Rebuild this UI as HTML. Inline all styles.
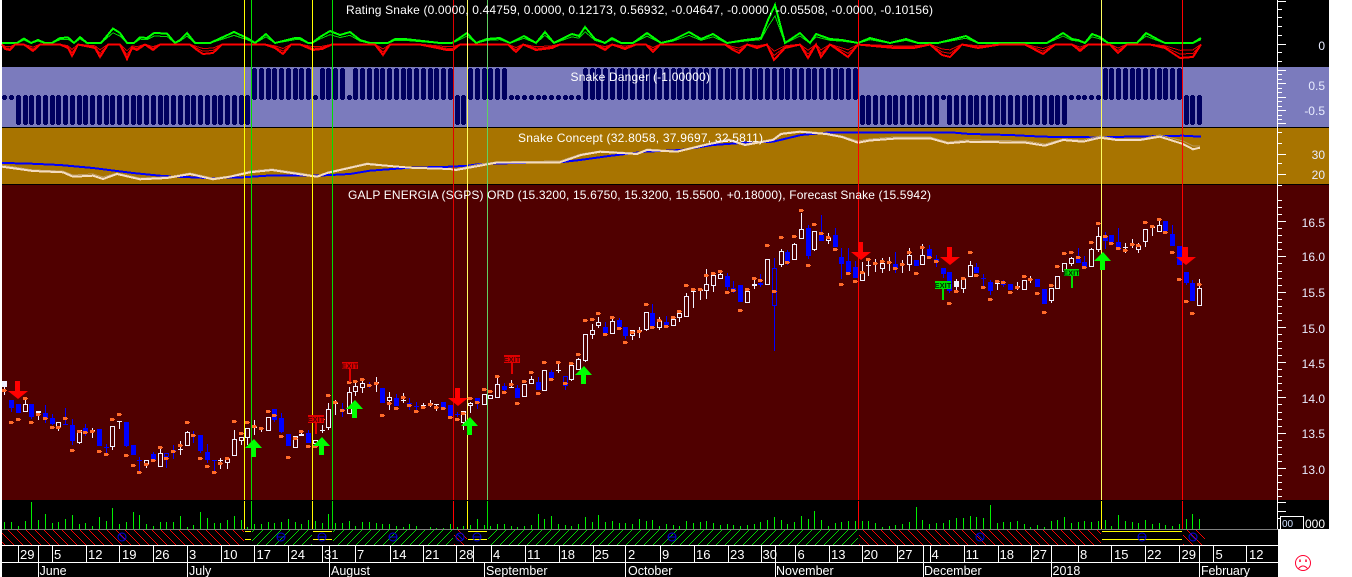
<!DOCTYPE html>
<html>
<head>
<meta charset="utf-8">
<style>
html,body{margin:0;padding:0;background:#fff;width:1352px;height:577px;overflow:hidden}
svg{display:block;position:absolute;left:0;top:0}
text{font-family:"Liberation Sans",sans-serif;fill:#fff}
.t{font-size:12px}
.a{font-size:12px;fill:#e8ecff;text-anchor:end}
.d{font-size:13px}
.m{font-size:12.5px}
.x{font-size:7.5px;font-weight:bold;text-anchor:middle}
</style>
</head>
<body>
<svg width="1352" height="577" viewBox="0 0 1352 577" xmlns="http://www.w3.org/2000/svg">
<rect x="0" y="0" width="1352" height="577" fill="#fff"/>
<rect x="2" y="0" width="1327" height="529" fill="#000"/>
<rect x="2" y="67" width="1327" height="60" fill="#7b7bbd"/>
<rect x="2" y="128" width="1327" height="56" fill="#a87400"/>
<rect x="2" y="185" width="1327" height="315" fill="#500000"/>
<rect x="2" y="529" width="1276" height="48" fill="#000"/>

<g id="back" shape-rendering="crispEdges"></g>

<g fill="none" stroke-linejoin="miter" shape-rendering="crispEdges">
<polyline id="gl" stroke="#00ff00" stroke-width="2" points=""/>
<polyline id="rl" stroke="#ff0000" stroke-width="2" points=""/>
<polyline stroke="#0000ff" stroke-width="2" points="2,163 27,163.5 60,165 93,168 133,173 163,176 207,178 240,177.5 267,175.7 317,175.7 350,174 370,170.7 410,167.7 450,166.7 468,165.7 480,164 528,162.7 560,162.3 580,160 609,156 645,151.7 681,150 713,145 745,142.7 773,141.7 801,135 826,132.7 950,132.3 970,134 1010,135 1043,136.7 1093,137.3 1127,136.7 1183,135.7 1201,136.7"/>
<polyline stroke="#b89860" stroke-width="1" points="2,165 33,170 63,171 73,175 93,174 103,177 117,173 140,178 167,177 190,173 213,178 230,176 250,171 272,169 300,173 317,176 328,172 367,163 410,168 450,169 456,169 480,164 496,162 560,161 581,154 600,151 637,153 647,149 677,151 705,144 729,139 745,144 773,139 781,133 800,131 826,133 842,136 858,141 870,139 894,137 930,137 948,142 966,140 1026,141 1045,144 1063,139 1083,140 1100,136 1117,139 1140,139 1160,135 1183,141 1193,146 1200,146"/>
<polyline stroke="#f4dcc0" stroke-width="2" points="2,166.7 33,171 63,172.3 73,176.7 93,175.7 103,179 117,174 140,179.3 167,178 190,174 213,179.3 230,176.7 250,172.3 272,170 300,174.3 317,176.7 328,172.7 367,164 410,167.7 450,169 456,170 480,165.7 496,162.7 560,162.3 581,155 600,151.7 637,154 647,150 677,151.7 705,145 729,140 745,145 773,140 781,134 800,131.7 826,134 842,137 858,142.7 870,140.5 894,138.7 930,138.3 948,143.3 966,141.7 1026,142.7 1045,145.7 1063,140 1083,141.7 1100,137.7 1117,140 1140,140 1160,136.7 1183,144 1193,149.3 1200,147.7"/>
</g>

<g id="chart" shape-rendering="crispEdges"></g>

<!-- vertical signal lines -->
<g shape-rendering="crispEdges">
<rect x="244" y="0" width="1" height="500" fill="#ffff00"/><rect x="244" y="501" width="1" height="28" fill="#ffff00"/>
<rect x="251" y="0" width="1" height="500" fill="#00e000"/><rect x="251" y="501" width="1" height="28" fill="#00e000"/>
<rect x="312" y="0" width="1" height="500" fill="#ffff00"/><rect x="312" y="501" width="1" height="28" fill="#ffff00"/>
<rect x="332" y="0" width="1" height="500" fill="#00e000"/><rect x="332" y="501" width="1" height="28" fill="#00e000"/>
<rect x="453" y="0" width="1" height="500" fill="#e00000"/><rect x="453" y="501" width="1" height="28" fill="#ff0000"/>
<rect x="467" y="0" width="1" height="500" fill="#ffff60"/><rect x="467" y="501" width="1" height="28" fill="#ffff00"/>
<rect x="487" y="0" width="1" height="500" fill="#60d060"/><rect x="487" y="501" width="1" height="28" fill="#00e000"/>
<rect x="858" y="0" width="1" height="500" fill="#ff0000"/><rect x="858" y="501" width="1" height="28" fill="#ff0000"/>
<rect x="1101" y="0" width="1" height="500" fill="#ffff60"/><rect x="1101" y="501" width="1" height="28" fill="#ffff00"/>
<rect x="1182" y="0" width="1" height="500" fill="#ff0000"/><rect x="1182" y="501" width="1" height="28" fill="#ff0000"/>
</g>

<!-- exit signs -->
<g shape-rendering="crispEdges">
<rect x="308" y="415" width="16" height="8" fill="#e00000"/><rect x="315" y="423" width="2" height="11" fill="#e00000"/>
<rect x="342" y="362" width="16" height="7" fill="#e00000"/><rect x="349" y="369" width="2" height="13" fill="#e00000"/>
<rect x="504" y="355" width="16" height="8" fill="#e00000"/><rect x="511" y="363" width="2" height="11" fill="#e00000"/>
<rect x="935" y="281" width="16" height="8" fill="#00e000"/><rect x="942" y="289" width="2" height="11" fill="#00e000"/>
<rect x="1064" y="269" width="15" height="7" fill="#00e000"/><rect x="1071" y="276" width="2" height="12" fill="#00e000"/>
</g>
<text class="x" x="316" y="422" style="fill:#500000">EXIT</text>
<text class="x" x="350" y="368.5" style="fill:#500000">EXIT</text>
<text class="x" x="512" y="362" style="fill:#500000">EXIT</text>
<text class="x" x="943" y="288" style="fill:#003000">EXIT</text>
<text class="x" x="1071.5" y="275.5" style="fill:#003000">EXIT</text>

<!-- arrows -->
<g fill="#ff0000">
<path d="M15 381h5v10h8l-10 8l-10-8h7z"/>
<path d="M455 388h5v10h8l-10 8l-10-8h7z"/>
<path d="M858 242h5v10h8l-10 8l-10-8h7z"/>
<path d="M947 247h5v10h8l-10 8l-10-8h7z"/>
<path d="M1183 247h5v10h8l-10 8l-10-8h7z"/>
</g>
<g fill="#00ff00">
<path d="M254 439l8 9h-6v9h-5v-9h-6z"/>
<path d="M322 437l8 9h-6v9h-5v-9h-6z"/>
<path d="M355 400l8 9h-6v9h-5v-9h-6z"/>
<path d="M470 417l8 9h-6v9h-5v-9h-6z"/>
<path d="M584 366l8 9h-6v9h-5v-9h-6z"/>
<path d="M1103 252l8 9h-6v9h-5v-9h-6z"/>
</g>

<!-- hatch row -->
<g id="hatch" shape-rendering="crispEdges"></g>
<g shape-rendering="crispEdges">
<rect x="245" y="531" width="6" height="1" fill="#ffff00"/><rect x="245" y="539" width="6" height="1" fill="#ffff00"/>
<rect x="313" y="531" width="19" height="1" fill="#ffff00"/><rect x="313" y="539" width="19" height="1" fill="#ffff00"/>
<rect x="468" y="531" width="19" height="1" fill="#ffff00"/><rect x="468" y="539" width="19" height="1" fill="#ffff00"/>
<rect x="1102" y="531" width="80" height="1" fill="#ffff00"/><rect x="1102" y="539" width="80" height="1" fill="#ffff00"/>
<rect x="2" y="529" width="1276" height="1" fill="#808080"/>
<rect x="2" y="545" width="1276" height="1" fill="#fff"/>
<rect x="2" y="562" width="1276" height="1" fill="#fff"/>
</g>
<g fill="none" stroke="#0000e0" stroke-width="1">
<circle cx="122" cy="537" r="4"/><path d="M119 534l6 6"/>
<circle cx="281" cy="537" r="4"/><path d="M277 537h8"/>
<circle cx="322" cy="537" r="4"/><path d="M318 537h8"/>
<circle cx="393" cy="537" r="4"/><path d="M389 537h8"/>
<circle cx="460" cy="537" r="4"/><path d="M457 534l6 6"/>
<circle cx="477" cy="537" r="4"/><path d="M473 537h8"/>
<circle cx="672" cy="537" r="4"/><path d="M668 537h8"/>
<circle cx="980" cy="537" r="4"/><path d="M977 534l6 6"/>
<circle cx="1142" cy="537" r="4"/><path d="M1138 537h8"/>
<circle cx="1193" cy="537" r="4"/><path d="M1190 534l6 6"/>
</g>

<!-- date dividers -->
<path shape-rendering="crispEdges" stroke="#fff" stroke-width="1" fill="none" d="M18.5 546V562M38.5 546V577M52.5 546V562M86.5 546V562M119.5 546V562M153.5 546V562M187.5 546V577M221.5 546V562M254.5 546V562M288.5 546V562M322.5 546V562M329.5 546V577M355.5 546V562M390.5 546V562M423.5 546V562M456.5 546V562M473.5 546V562M484.5 563V577M491.5 546V562M525.5 546V562M559.5 546V562M593.5 546V562M625.5 546V577M660.5 546V562M694.5 546V562M728.5 546V562M761.5 546V562M775.5 546V577M795.5 546V562M829.5 546V562M862.5 546V562M897.5 546V562M923.5 546V577M930.5 546V562M964.5 546V562M998.5 546V562M1031.5 546V562M1051.5 546V577M1078.5 546V562M1111.5 546V562M1145.5 546V562M1179.5 546V562M1199.5 546V577M1213.5 546V562M1246.5 546V562"/>

<!-- titles -->
<text class="t" x="346" y="14" textLength="587" lengthAdjust="spacing">Rating Snake (0.0000, 0.44759, 0.0000, 0.12173, 0.56932, -0.04647, -0.0000, -0.05508, -0.0000, -0.10156)</text>
<text class="t" x="570.5" y="81" textLength="139.5" lengthAdjust="spacing">Snake Danger (-1.00000)</text>
<text class="t" x="518" y="142" textLength="245" lengthAdjust="spacing">Snake Concept (32.8058, 37.9697, 32.5811)</text>
<text class="t" x="348" y="199" textLength="583" lengthAdjust="spacing">GALP ENERGIA (SGPS) ORD (15.3200, 15.6750, 15.3200, 15.5500, +0.18000), Forecast Snake (15.5942)</text>

<!-- axis labels -->
<text class="a" x="1325" y="50">0</text>
<text class="a" x="1325" y="90">0.5</text>
<text class="a" x="1325" y="115">-0.5</text>
<text class="a" x="1325" y="159">30</text>
<text class="a" x="1325" y="179">20</text>
<text class="a" x="1325" y="227">16.5</text>
<text class="a" x="1325" y="261">16.0</text>
<text class="a" x="1325" y="297">15.5</text>
<text class="a" x="1325" y="333">15.0</text>
<text class="a" x="1325" y="368">14.5</text>
<text class="a" x="1325" y="403">14.0</text>
<text class="a" x="1325" y="438">13.5</text>
<text class="a" x="1325" y="474">13.0</text>
<rect x="1280.5" y="516.5" width="23" height="13" fill="#000" stroke="#fff" stroke-width="1" shape-rendering="crispEdges"/>
<text x="1282" y="527" style="font-size:10px;fill:#cfe0ff">00</text>
<text class="a" x="1325" y="528" style="fill:#fff">000</text>
<rect x="1278" y="529" width="74" height="48" fill="#fff"/>

<!-- date labels -->
<text class="d" x="20" y="559">29</text><text class="d" x="54" y="559">5</text><text class="d" x="88" y="559">12</text><text class="d" x="122" y="559">19</text><text class="d" x="155" y="559">26</text><text class="d" x="189" y="559">3</text><text class="d" x="223" y="559">10</text><text class="d" x="256.5" y="559">17</text><text class="d" x="290.5" y="559">24</text><text class="d" x="324" y="559">31</text><text class="d" x="357" y="559">7</text><text class="d" x="392" y="559">14</text><text class="d" x="425" y="559">21</text><text class="d" x="459" y="559">28</text><text class="d" x="493" y="559">4</text><text class="d" x="527" y="559">11</text><text class="d" x="560.5" y="559">18</text><text class="d" x="594.5" y="559">25</text><text class="d" x="628" y="559">2</text><text class="d" x="662" y="559">9</text><text class="d" x="696" y="559">16</text><text class="d" x="730" y="559">23</text><text class="d" x="762.5" y="559">30</text><text class="d" x="797.5" y="559">6</text><text class="d" x="831" y="559">13</text><text class="d" x="863.5" y="559">20</text><text class="d" x="898" y="559">27</text><text class="d" x="931.5" y="559">4</text><text class="d" x="965.5" y="559">11</text><text class="d" x="999.5" y="559">18</text><text class="d" x="1032.5" y="559">27</text><text class="d" x="1080" y="559">8</text><text class="d" x="1114" y="559">15</text><text class="d" x="1147" y="559">22</text><text class="d" x="1181.5" y="559">29</text><text class="d" x="1215.5" y="559">5</text><text class="d" x="1249" y="559">12</text>
<text class="m" x="39.5" y="575">June</text><text class="m" x="189" y="575">July</text><text class="m" x="331" y="575">August</text><text class="m" x="486" y="575" textLength="61.5">September</text><text class="m" x="628" y="575">October</text><text class="m" x="776" y="575">November</text><text class="m" x="924" y="575">December</text><text class="m" x="1052.5" y="575">2018</text><text class="m" x="1201" y="575" textLength="49">February</text>

<!-- status face -->
<g fill="none" stroke="#ff0030" stroke-width="1">
<circle cx="1303" cy="563" r="7.5"/>
<path d="M1298.5 568.5q4.5-5 9 0"/>
<path d="M1300 559.5v2.5M1306 559.5v2.5" stroke-width="1.5"/>
</g>
</svg>
<script>
(function(){
var G=[[2,41],[10,42],[17,43],[24,38.5],[31,43],[38,40],[45,43],[52,43],[60,38],[68,37.5],[74,42],[80,37],[87,43],[94,43],[101,42],[113,28.5],[120,33],[127,43],[134,43],[140,37.3],[147,38],[154,33],[167,33.5],[175,43],[180,40],[187,33],[195,42],[210,42],[234,32],[247,38],[255,43],[266,34],[275,42],[295,38],[300,38],[308,41],[312,43],[320,37],[330,31],[340,35],[350,32],[360,40],[370,41],[380,42],[388,43],[395,39],[405,39],[440,43],[452,43],[467,33],[476,42],[487,39],[500,38],[510,42],[524,36],[536,42],[545,32],[554,42],[572,34],[579,36],[585,27],[595,39],[605,43],[612,38],[621,43],[633,41],[647,33],[661,42],[673,40],[689,32],[701,39],[713,34],[727,43],[745,40],[761,38],[768,20],[775,5],[785,42],[800,33],[810,42],[816,34],[830,39],[842,40],[858,43],[870,38],[890,42],[906,39],[918,42],[938,43],[966,36],[978,42],[1002,43],[1023,41],[1035,41],[1047,43],[1063,33],[1072,39],[1078,40],[1085,43],[1092,34],[1100,37],[1108,43],[1137,43],[1146,33],[1157,39],[1165,43],[1193,44],[1201,38]];
var R=[[2,46],[5,49],[10,50],[15,47],[24,46],[33,51],[40,46],[50,45],[60,45],[68,48],[72,56],[78,47],[95,48],[100,57],[108,47],[120,46],[127,59],[132,48],[137,50],[145,46],[153,50],[160,46],[190,45],[197,50],[203,54],[213,53],[222,46],[265,45],[275,48],[283,54],[291,46],[300,47],[313,50],[322,49],[332,45],[375,45],[383,55],[390,47],[400,47],[420,46],[447,50],[453,50],[460,46],[490,45],[508,47],[516,52],[523,46],[536,50],[552,48],[560,47],[595,45],[605,50],[612,46],[625,49],[636,45],[646,46],[653,52],[660,45],[725,45],[733,50],[739,53],[747,45],[757,48],[767,47],[774,60],[785,48],[800,46],[808,58],[816,45],[821,57],[830,45],[848,57],[858,46],[894,48],[914,48],[930,46],[942,55],[950,57],[962,47],[978,48],[1000,46],[1025,45],[1043,54],[1055,45],[1072,45],[1080,51],[1088,44],[1110,46],[1118,53],[1127,46],[1150,45],[1165,48],[1180,58],[1193,57],[1201,44]];
R=R.map(function(p){return [p[0],p[1]<=47?44.5:p[1]]});
G=G.map(function(p){return [p[0],p[1]>=41?43:p[1]]});
function pts(a){return a.map(function(p){return p[0]+','+p[1]}).join(' ')}
function sc(a,k,b){return pts(a.map(function(p){return [p[0],b+(p[1]-b)*k]}))}
document.getElementById('gl').setAttribute('points',pts(G));
document.getElementById('rl').setAttribute('points',pts(R));
var s='';
function r(x,y,w,h,f){s+='<rect x="'+x+'" y="'+y+'" width="'+w+'" height="'+h+'" fill="'+f+'"/>'}
s+='<polyline fill="none" stroke="#00e000" stroke-width="1" points="'+sc(G,.72,44)+'"/>';
s+='<polyline fill="none" stroke="#e00000" stroke-width="1" points="'+sc(R,.72,44)+'"/>';
s+='<polyline fill="none" stroke="#e00000" stroke-width="1" points="'+sc(R,.45,44)+'"/>';
document.getElementById('back').innerHTML=s;

// hatch drawn pixel by pixel
function hatch(a,b,dir){var d='';for(var x=a;x<b;x++)for(var y=530;y<545;y++){var m=dir>0?(x-y):(x+y);if(((m%9)+9)%9==0)d+='M'+x+' '+y+'h1v1h-1z'}return d}
var hr=hatch(2,244,1)+hatch(454,467,1)+hatch(859,1101,1)+hatch(1183,1205,1);
var hg=hatch(252,312,-1)+hatch(333,453,-1)+hatch(488,858,-1);
document.getElementById('hatch').innerHTML='<path fill="#ff0000" d="'+hr+'"/><path fill="#00d800" d="'+hg+'"/>';

s='';
var X=function(n){return Math.round(4.4+6.75*n)};
var PC='#000060';
function pill(x,y,h){r(x-2,y,5,h,PC);r(x-1,y-1,3,h+2,PC)}
for(var n=0;n<178;n++){
  var x=X(n),st;
  if(n<2)st=0;
  else if(n<=36)st=-1;
  else if(n<=66)st=1;
  else if(n<=68)st=-1;
  else if(n<=74)st=1;
  else if(n<=85)st=0;
  else if(n<=126)st=1;
  else if(n<=157)st=-1;
  else if(n<=162)st=0;
  else if(n<=174)st=1;
  else st=-1;
  if(n==46||n==51||n==139)st=0;
  if(st==1)pill(x,69,30);
  else if(st==-1)pill(x,96,28);
  else {r(x-2,96,5,3,PC);r(x-1,95,3,5,PC)}
}
r(1277,0,1,529,'#fff');
function tk(y,l){r(1278,y,l?8:4,1,'#fff')}
[1,44].forEach(function(y){tk(y,1)});[9,17,26,35,52,61].forEach(function(y){tk(y,0)});
for(var i=0;i<13;i++){var yy=Math.round(70+i*4.45);tk(yy,(i==0||i==6||i==3||i==9||i==12)?1:0)}
[154,174].forEach(function(y){tk(y,1)});[132,143,163].forEach(function(y){tk(y,0)});tk(185,0);
for(var y=200;y<=497;y+=7.05){var ry=Math.round(y);var lg=[221,256,292,327,362,397,433,468].some(function(v){return Math.abs(v-ry)<3});tk(lg?[221,256,292,327,362,397,433,468].filter(function(v){return Math.abs(v-ry)<3})[0]:ry,lg)}
[502,511,518].forEach(function(y){tk(y,1)});

var C=[
['f',381,387,0,395,390],['b',400,408,0,412,422],['b',404,413,0,0,419],['w',404,411,397,0,398],['b',404,417,0,419,422],['w',411,412,0,420,414],['b',413,419,405,423,418],['b',418,424,414,425,427],['w',422,427,0,431,427],['b',424,425,408,425,418],
['b',425,441,419,445,450],['w',430,442,0,444,431],['b',428,433,424,436,432],['f',430,431,428,438,431],['b',429,446,0,0,451],['b',447,448,444,456,454],['w',426,446,0,450,419],['f',421,422,0,429,414],['b',422,446,0,447,455],['b',445,455,0,0,465],
['b',460,461,457,473,472],['w',460,463,0,468,464],['b',454,461,452,462,460],['w',453,466,448,0,447],['h',453,456,0,468,458],['b',450,451,445,459,451],['f',449,450,441,455,445],['w',432,445,431,446,422],['b',435,436,431,443,435],['b',435,451,0,453,458],
['b',452,460,444,463,466],['b',460,461,460,473,472],['f',460,461,458,469,463],['w',458,462,457,469,458],['w',439,455,430,0,421],['w',437,440,0,445,433],['w',428,437,0,445,422],['f',427,428,420,435,426],['f',428,429,427,432,428],['w',417,430,0,431,411],
['b',409,420,409,422,415],['b',418,432,413,433,436],['b',434,446,0,0,457],['w',436,447,0,448,438],['f',434,436,430,436,431],['b',433,443,430,0,446],['w',440,443,0,448,446],['f',430,431,425,433,419],['w',409,427,403,430,395],['f',403,404,400,415,402],
['b',409,410,403,417,410],['w',392,413,387,0,382],['w',386,391,382,396,381],['w',383,387,378,393,379],['b',385,386,382,388,385],['f',382,383,377,392,383],['b',388,403,0,0,415],['w',397,400,392,410,403],['b',398,406,394,0,408],['f',400,401,393,403,397],
['b',403,404,398,410,405],['b',406,407,402,412,411],['f',405,406,403,409,407],['f',403,404,400,407,404],['f',404,405,404,411,407],['b',402,408,0,0,408],['b',405,416,0,0,417],['b',414,415,412,417,419],['w',411,422,0,430,413],['w',403,405,402,413,398],
['b',398,402,0,409,402],['w',394,404,0,0,389],['w',395,398,0,0,391],['w',384,397,378,0,376],['b',386,390,383,394,392],['f',387,388,380,388,384],['b',388,398,385,0,403],['w',384,396,0,397,381],['w',379,383,376,0,372],['b',382,390,377,0,393],
['w',370,390,0,0,362],['b',372,378,370,0,379],['f',370,371,363,373,362],['h',376,385,0,390,383],['w',365,379,0,381,363],['w',359,369,358,0,354],['w',334,360,0,362,320],['w',330,334,324,339,319],['w',322,325,317,328,313],['b',327,333,322,0,334],
['w',321,333,318,0,317],['b',320,327,318,0,328],['b',327,336,0,339,342],['w',330,335,0,340,332],['f',330,331,327,338,331],['w',312,329,0,331,304],['b',313,326,304,0,327],['w',321,327,317,330,320],['b',322,325,316,327,326],['w',319,325,0,0,317],
['w',313,317,0,322,311],['w',296,316,293,0,285],['f',291,292,288,308,289],['f',290,291,288,300,289],['w',284,290,269,299,275],['w',275,285,0,292,273],['w',274,278,272,0,271],['b',276,287,273,290,292],['b',288,292,281,293,290],['b',285,302,0,0,310],
['w',291,302,288,0,289],['f',284,286,280,289,278],['b',283,285,274,287,280],['w',259,284,0,0,245],['h',268,305,258,351,291],['w',251,264,249,267,237],['b',252,262,250,265,262],['w',244,259,243,260,236],['w',229,238,213,0,210],['b',228,256,225,259,265],
['w',231,249,0,251,224],['b',235,241,215,0,233],['w',237,240,233,244,237],['b',235,247,228,0,249],['b',257,264,248,279,284],['b',261,272,248,0,273],['b',267,278,261,0,281],['w',273,280,262,0,272],['f',265,266,258,276,259],['f',263,264,259,272,263],
['w',263,268,258,273,261],['f',262,263,257,271,262],['b',264,268,252,273,268],['f',264,265,260,273,264],['w',255,264,248,271,252],['b',260,266,0,0,273],['w',255,264,244,0,247],['b',249,257,245,0,257],['b',259,261,255,267,261],['b',268,274,0,278,282],
['b',272,291,0,293,303],['f',281,287,279,293,291],['w',279,288,0,293,278],['w',265,276,261,0,252],['b',267,273,263,0,275],['b',278,279,274,287,287],['b',282,291,280,295,299],['f',283,284,280,290,281],['b',284,285,280,287,282],['b',284,290,0,0,292],
['f',286,287,282,290,287],['w',280,289,0,0,276],['f',279,280,276,283,279],['b',279,287,0,0,293],['b',289,304,0,0,312],['w',288,300,0,303,285],['w',276,288,0,0,266],['w',263,271,0,0,253],['w',258,263,257,266,252],['b',259,263,248,0,257],
['b',262,267,256,269,267],['w',249,266,248,0,242],['w',236,249,227,252,223],['b',237,241,232,249,236],['b',235,242,0,0,243],['b',242,250,228,0,248],['f',247,248,243,253,250],['f',244,245,239,248,244],['w',245,249,243,253,245],['w',229,241,0,247,222],
['f',227,228,225,236,226],['w',225,231,221,0,219],['b',221,231,0,0,232],['b',234,246,225,0,252],['b',246,265,0,0,279],['b',272,283,0,285,301],['b',283,301,280,0,313],['w',288,305,279,0,284]
];
var WH='#f0f0ff',BL='#0000ff',OR='#ff6a2a';
C.forEach(function(c,n){
  var x=X(n),col=(c[0]=='b'||c[0]=='h')?BL:WH;
  if(c[3])r(x,c[3],1,c[1]-c[3],col);
  if(c[4])r(x,c[2],1,c[4]-c[2],col);
  var h=c[2]-c[1];
  if(c[0]=='b'||c[0]=='f'){r(x-2,c[1],5,Math.max(h,1),col)}
  else{
    r(x-2,c[1],5,1,col);r(x-2,c[2],5,1,col);r(x-2,c[1],1,h+1,col);r(x+2,c[1],1,h+1,col);
  }
});
C.forEach(function(c,n){
  var x=X(n);
  r(x-2,c[5]-1,4,3,OR);r(x+2,c[5],1,1,OR);
});
var V=[7,7,3,8,27,9,15,6,7,10,14,5,6,3,12,8,21,5,7,17,14,5,3,7,7,7,13,2,4,17,11,6,6,9,13,9,2,5,5,7,6,7,10,7,5,9,8,6,15,6,6,8,3,7,7,6,5,5,3,2,5,3,0,2,1,
1,5,2,3,4,10,4,3,5,5,3,2,3,4,15,10,13,5,4,3,5,12,7,14,7,8,6,6,5,10,8,9,3,5,4,3,8,6,7,8,6,4,5,4,3,4,5,7,9,12,9,5,7,13,10,18,9,3,6,7,8,8,8,8,6,2,3,4,5,7,22,9,5,6,6,9,11,11,13,12,11,24,6,7,7,8,5,2,4,2,8,9,12,6,7,8,7,8,9,3,14,8,7,6,9,5,6,4,3,5,10,15,10];
V.forEach(function(h,n){if(h>0)r(X(n),529-h,1,h,'#00f000')});
document.getElementById('chart').innerHTML=s;
})();
</script>
</body>
</html>
